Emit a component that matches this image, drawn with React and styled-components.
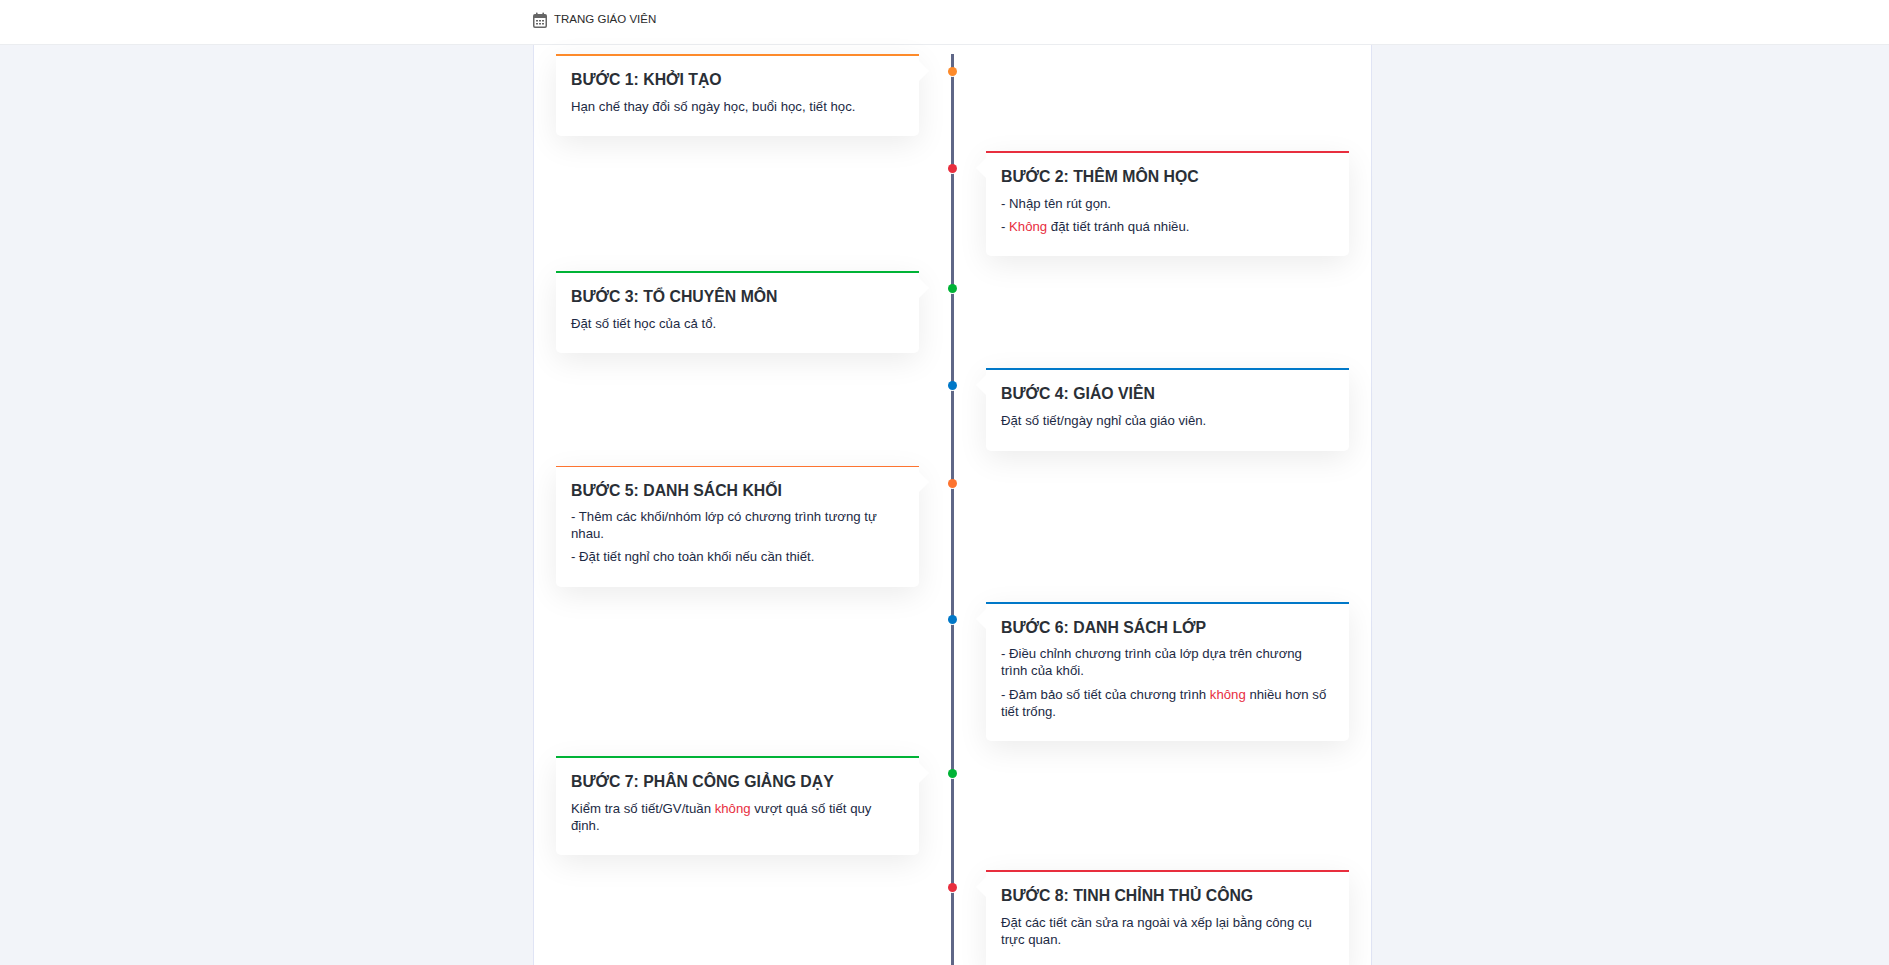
import React from 'react';
import styled, { createGlobalStyle } from 'styled-components';

const steps = [
  { title: 'BƯỚC 1: KHỞI TẠO', color: '#fd8a2a', lines: [['Hạn chế thay đổi số ngày học, buổi học, tiết học.']] },
  { title: 'BƯỚC 2: THÊM MÔN HỌC', color: '#e82e3e', lines: [['- Nhập tên rút gọn.'], ['- ', 'Không', ' đặt tiết tránh quá nhiều.']] },
  { title: 'BƯỚC 3: TỔ CHUYÊN MÔN', color: '#00b336', lines: [['Đặt số tiết học của cả tổ.']] },
  { title: 'BƯỚC 4: GIÁO VIÊN', color: '#0078c8', lines: [['Đặt số tiết/ngày nghỉ của giáo viên.']] },
  { title: 'BƯỚC 5: DANH SÁCH KHỐI', color: '#fd7430', thin: true, lines: [['- Thêm các khối/nhóm lớp có chương trình tương tự nhau.'], ['- Đặt tiết nghỉ cho toàn khối nếu cần thiết.']] },
  { title: 'BƯỚC 6: DANH SÁCH LỚP', color: '#0078c8', lines: [['- Điều chỉnh chương trình của lớp dựa trên chương trình của khối.'], ['- Đảm bảo số tiết của chương trình ', 'không', ' nhiều hơn số tiết trống.']] },
  { title: 'BƯỚC 7: PHÂN CÔNG GIẢNG DẠY', color: '#00b336', lines: [['Kiểm tra số tiết/GV/tuần ', 'không', ' vượt quá số tiết quy định.']] },
  { title: 'BƯỚC 8: TINH CHỈNH THỦ CÔNG', color: '#e82e3e', lines: [['Đặt các tiết cần sửa ra ngoài và xếp lại bằng công cụ trực quan.']] },
];

export default function App() {
  return (
    <>
      <GlobalStyle />
      <Header>
        <HeaderInner>
          <CalendarIcon />
          <HeaderTitle>TRANG GIÁO VIÊN</HeaderTitle>
        </HeaderInner>
      </Header>
      <Panel>
        <Timeline>
          {steps.map((step, i) => (
            <Row key={step.title}>
              <Card $color={step.color} $thin={step.thin} $right={i % 2 === 1}>
                <CardTitle>{step.title}</CardTitle>
                {step.lines.map((parts, j) => (
                  <CardText key={j}>
                    {parts.map((part, k) =>
                      k === 1 ? <Warn key={k}>{part}</Warn> : <span key={k}>{part}</span>
                    )}
                  </CardText>
                ))}
              </Card>
              <Dot $color={step.color} />
            </Row>
          ))}
        </Timeline>
      </Panel>
    </>
  );
}

function CalendarIcon() {
  return (
    <svg width="14" height="16" viewBox="0 0 14 16" fill="none">
      <rect x="0.75" y="2.75" width="12.5" height="12.5" rx="1.2" stroke="#666" strokeWidth="1.5" />
      <rect x="1" y="3" width="12" height="3" fill="#666" />
      <rect x="3" y="0.5" width="1.6" height="3.5" rx="0.6" fill="#666" />
      <rect x="9.4" y="0.5" width="1.6" height="3.5" rx="0.6" fill="#666" />
      <path d="M3 8h2v1.5H3zM6 8h2v1.5H6zM9 8h2v1.5H9zM3 11h2v1.5H3zM6 11h2v1.5H6zM9 11h2v1.5H9z" fill="#666" />
    </svg>
  );
}

const GlobalStyle = createGlobalStyle`
  html, body {
    margin: 0;
    height: 965px;
    overflow: hidden;
    background: #f2f4f9;
  }
  * {
    box-sizing: border-box;
  }
  body {
    font-family: 'Liberation Sans', Arial, sans-serif;
  }
`;

const Header = styled.header`
  height: 45px;
  background: #fff;
  border-bottom: 1px solid #ebedf0;
`;

const HeaderInner = styled.div`
  display: flex;
  align-items: center;
  gap: 7px;
  width: 840px;
  margin-left: 533px;
  height: 40px;
`;

const HeaderTitle = styled.span`
  font-size: 11.5px;
  color: #2b2b2b;
  margin-bottom: 2px;
`;

const Panel = styled.main`
  width: 839px;
  margin-left: 533px;
  min-height: 920px;
  padding: 9.1px 22px 0;
  background: #fff;
  border-left: 1px solid #e0e4f5;
  border-right: 1px solid #e0e4f5;
`;

const Timeline = styled.div`
  position: relative;
  display: flex;
  flex-direction: column;
  gap: 15px;
  padding-bottom: 40px;

  &::before {
    content: '';
    position: absolute;
    top: 0;
    bottom: 0;
    left: 395px;
    width: 3px;
    background: #5f6787;
  }
`;

const Row = styled.div`
  position: relative;
  display: grid;
  grid-template-columns: 363px 363px;
  column-gap: 67px;
`;

const Card = styled.div`
  position: relative;
  grid-column: ${(p) => (p.$right ? 2 : 1)};
  padding: 14px 18px 15.5px 15px;
  background: #fff;
  border-top: ${(p) => (p.$thin ? 1 : 2)}px solid ${(p) => p.$color};
  border-radius: 0 0 5px 5px;
  box-shadow: 0 8px 30px rgba(0, 0, 0, 0.08);

  &::after {
    content: '';
    position: absolute;
    top: 5px;
    ${(p) => (p.$right ? 'right: 100%;' : 'left: 100%;')}
    border-style: solid;
    border-width: ${(p) => (p.$right ? '10px 10px 10px 0' : '10px 0 10px 10px')};
    border-color: transparent;
    ${(p) => (p.$right ? 'border-right-color: #fff;' : 'border-left-color: #fff;')}
  }
`;

const CardTitle = styled.h3`
  margin: 0 0 8.5px;
  font-size: 15.8px;
  line-height: 19px;
  font-weight: 700;
  color: #2a2f36;
`;

const CardText = styled.p`
  margin: 0 0 6px;
  font-size: 13.2px;
  line-height: 17.1px;
  color: #1c2a44;
`;

const Warn = styled.span`
  color: #e82e3e;
`;

const Dot = styled.span`
  position: absolute;
  top: 13px;
  left: 392px;
  width: 9px;
  height: 9px;
  border-radius: 50%;
  background: ${(p) => p.$color};
  box-shadow: 0 1px 0 #fff;
`;
